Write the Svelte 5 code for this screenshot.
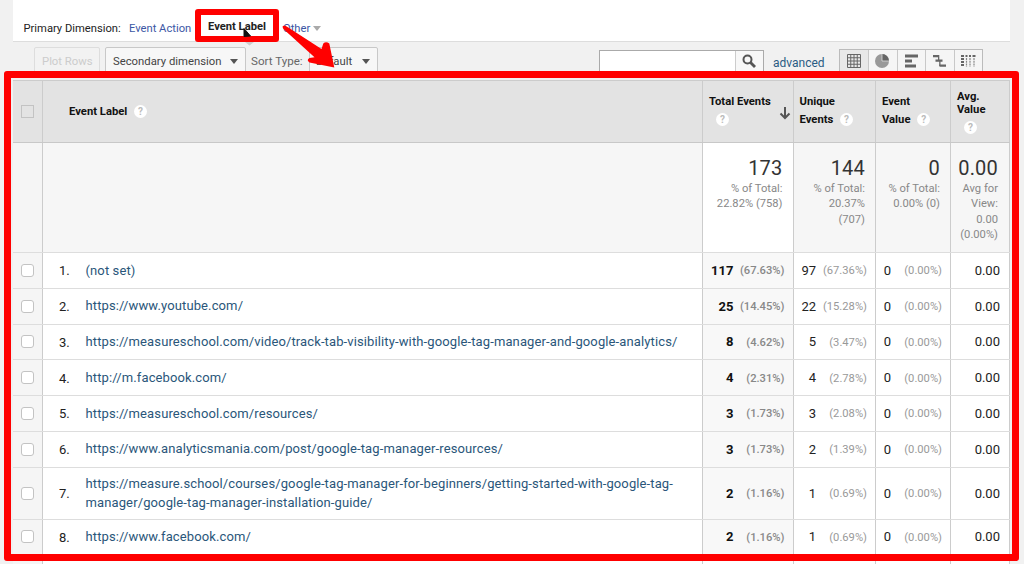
<script>
const views = ['table', 'pie', 'bars', 'compare', 'pivot'];

const totals = [
    { value: '173', lines: ['% of Total:', '22.82% (758)'] },
    { value: '144', lines: ['% of Total:', '20.37%', '(707)'] },
    { value: '0', lines: ['% of Total:', '0.00% (0)'] },
    { value: '0.00', lines: ['Avg for', 'View:', '0.00', '(0.00%)'] }
];

const rows = [
    { label: ['(not set)'], total: 117, totalPct: '67.63%', unique: 97, uniquePct: '67.36%' },
    { label: ['https://www.youtube.com/'], total: 25, totalPct: '14.45%', unique: 22, uniquePct: '15.28%' },
    { label: ['https://measureschool.com/video/track-tab-visibility-with-google-tag-manager-and-google-analytics/'], total: 8, totalPct: '4.62%', unique: 5, uniquePct: '3.47%' },
    { label: ['http://m.facebook.com/'], total: 4, totalPct: '2.31%', unique: 4, uniquePct: '2.78%' },
    { label: ['https://measureschool.com/resources/'], total: 3, totalPct: '1.73%', unique: 3, uniquePct: '2.08%' },
    { label: ['https://www.analyticsmania.com/post/google-tag-manager-resources/'], total: 3, totalPct: '1.73%', unique: 2, uniquePct: '1.39%' },
    { label: ['https://measure.school/courses/google-tag-manager-for-beginners/getting-started-with-google-tag-', 'manager/google-tag-manager-installation-guide/'], total: 2, totalPct: '1.16%', unique: 1, uniquePct: '0.69%' },
    { label: ['https://www.facebook.com/'], total: 2, totalPct: '1.16%', unique: 1, uniquePct: '0.69%' }
];
</script>

{#snippet help()}
    <span class="help">?</span>
{/snippet}

<div class="page">
    <div class="report">
        <nav class="dimensions">
            <span class="caption">Primary Dimension:</span>
            <span class="link action">Event Action</span>
            <b class="current">Event Label</b>
            <span class="link other">Other</span>
            <i class="caret light"></i>
        </nav>

        <div class="toolbar">
            <div class="button plot">Plot Rows</div>
            <div class="button secondary"><span>Secondary dimension</span><i class="caret"></i></div>
            <span class="sort">Sort Type:</span>
            <div class="button default"><span>Default</span><i class="caret"></i></div>
            <div class="search">
                <div class="field"></div>
                <div class="go">
                    <svg width="16" height="16" viewBox="0 0 16 16">
                        <circle cx="5.5" cy="5.5" r="4" fill="none" stroke="#555" stroke-width="2" />
                        <path d="M8.5 8.5L13 13" stroke="#555" stroke-width="2.8" />
                    </svg>
                </div>
            </div>
            <span class="advanced">advanced</span>
            <div class="views">
                {#each views as view, i}
                    <div class="view" class:active={i === 0}>
                        <svg width="18" height="16" viewBox="0 0 18 16" fill="#666">
                            {#if view === 'table'}
                                <path d="M2.5 1.5h13v13h-13zM2.5 4.75h13M2.5 8h13M2.5 11.25h13M5.75 1.5v13M9 1.5v13M12.25 1.5v13" fill="none" stroke="#666" />
                            {:else if view === 'pie'}
                                <circle cx="9" cy="8" r="7" fill="#999" />
                                <path d="M9 8V1a7 7 0 0 1 7 7z" fill="#666" />
                                <path d="M9 1v7h7" fill="none" stroke="#ddd" stroke-width=".8" />
                            {:else if view === 'bars'}
                                <path d="M3 1.5h13v3H3zM3 6.5h7v3H3zM3 11.5h11v3H3z" />
                            {:else if view === 'compare'}
                                <path d="M3 2h5.5v2.2H3zM5.5 6.5h7v2.2h-7zM9.5 11.5H16v2.2H9.5z" />
                                <path d="M8 2h1.3v5H8zM9.2 8h1.3v5H9.2z" />
                            {:else}
                                <path d="M2 2h3v2H2zM2 5h3v2H2zM2 8h3v2H2zM2 11h3v2H2z" />
                                <path d="M6.5 2h2v2h-2zM10 2h2v2h-2zM13.5 2h3v2h-3z" />
                                <path d="M7.5 5v9M11 5v9M15 5v9" stroke="#888" stroke-width="1.2" stroke-dasharray="2 .8" />
                            {/if}
                        </svg>
                    </div>
                {/each}
            </div>
        </div>

        <div class="table">
            <div class="row head">
                <div class="check"><i class="box"></i></div>
                <div class="name">Event Label {@render help()}</div>
                <div class="metric h-total">
                    <span>Total Events<br />{@render help()}</span>
                    <svg width="12" height="14" viewBox="0 0 12 14" fill="none" stroke="#555" stroke-width="2">
                        <path d="M6 1v11M1.5 7.5L6 12l4.5-4.5" />
                    </svg>
                </div>
                <div class="metric">Unique<br />Events {@render help()}</div>
                <div class="metric">Event<br />Value {@render help()}</div>
                <div class="metric h-avg">Avg.<br />Value<br />{@render help()}</div>
            </div>

            <div class="row summary">
                <div class="check"></div>
                <div></div>
                {#each totals as t}
                    <div class="sum">
                        <div class="big">{t.value}</div>
                        {#each t.lines as line}
                            <div class="sub">{line}</div>
                        {/each}
                    </div>
                {/each}
            </div>

            {#each rows as r, i}
                <div class="row item" class:tall={r.label.length > 1}>
                    <div class="check"><i class="box"></i></div>
                    <div class="name">
                        <span class="index">{i + 1}.</span>
                        <span class="url">{#each r.label as part}<span>{part}</span>{/each}</span>
                    </div>
                    <div class="val total"><b>{r.total}</b><span class="pct">({r.totalPct})</span></div>
                    <div class="val unique"><span class="num">{r.unique}</span><span class="pct">({r.uniquePct})</span></div>
                    <div class="val value"><span class="num">0</span><span class="pct">(0.00%)</span></div>
                    <div class="val avg">0.00</div>
                </div>
            {/each}
            <div class="row rest">
                <div class="check"></div><div></div><div></div><div></div><div></div><div></div>
            </div>
        </div>
    </div>

    <!-- annotations over the report -->
    <div class="frame"></div>
    <div class="mark"></div>
    <svg class="overlay" width="1024" height="564" viewBox="0 0 1024 564">
        <path d="M245 42L249.5 45.5L254 42z" fill="#ccc" />
        <path d="M244 28.5V36.5L250.5 36z" fill="#111" stroke="#111" />
        <path d="M282.7 26Q285 25 287.5 27L321.5 49L323.3 43.5Q326 41 329.3 43.5L334.3 67.5L309.5 62.5Q306 60 309.5 58L314.5 57.3L284.5 30Q282 28 282.7 26z" fill="#f00" />
    </svg>
</div>

<style>
:global(body) {
    background: #f1f1f1;
}

.page {
    position: relative;
    width: 1024px;
    height: 564px;
    overflow: hidden;
    background: #f1f1f1;
    font-family: Roboto, "Liberation Sans", sans-serif;
    font-size: 13px;
    color: #222;
}

.page * {
    box-sizing: border-box;
}

.report {
    width: 997px;
    margin-left: 13px;
}

.dimensions {
    display: flex;
    height: 42px;
    padding: 20px 0 0 10.5px;
    background: #fff;
    border-bottom: 1px solid #ddd;
    font-size: 11.2px;
    line-height: 17px;
    white-space: nowrap;
}

.caption {
    width: 105.5px;
}

.link {
    color: #3c57a5;
}

.action {
    width: 79px;
}

.current {
    width: 75px;
    margin-top: -2px;
    font-weight: 700;
    color: #222;
}

.caret {
    width: 0;
    height: 0;
    border: 4px solid transparent;
    border-top: 5px solid #555;
    border-bottom: 0;
}

.caret.light {
    margin: 6px 0 0 3px;
    border-top-color: #aaa;
}

.toolbar {
    display: flex;
    height: 38px;
    padding-top: 5px;
    background: #f1f1f1;
    font-size: 11.3px;
}

.button {
    display: flex;
    align-items: center;
    justify-content: space-between;
    height: 28px;
    border: 1px solid #c8c8c8;
    border-radius: 2px;
    background: #f7f7f7;
    color: #444;
    white-space: nowrap;
}

.plot {
    width: 66px;
    margin-left: 21px;
    padding: 1px 0 0 7px;
    border-color: #ddd;
    background: #f2f2f2;
    color: #ccc;
}

.secondary {
    width: 141px;
    margin-left: 5px;
    padding: 0 7px;
}

.sort {
    width: 58px;
    margin-left: 5px;
    font-size: 11.6px;
    line-height: 28px;
    color: #666;
    white-space: nowrap;
}

.default {
    width: 69px;
    padding: 0 7px 0 6px;
}

.search {
    display: flex;
    width: 165px;
    height: 26px;
    margin: 3px 0 0 221px;
    border: 1px solid #aaa;
}

.field {
    flex: 1;
    background: #fff;
}

.go {
    width: 28px;
    padding: 3px 0 0 6px;
    border-left: 1px solid #ccc;
    background: #f7f7f7;
}

.advanced {
    width: 67px;
    margin-left: 9px;
    font-size: 12px;
    line-height: 32px;
    color: #2a5b83;
}

.views {
    display: flex;
    width: 144px;
    height: 26px;
    margin: 2px 0 0 -1px;
    border: 1px solid #bbb;
}

.view {
    flex: 1;
    padding: 3px 0 0 5px;
    background: #f5f5f5;
}

.view + .view {
    border-left: 1px solid #c8c8c8;
    padding-left: 4px;
}

.view.active {
    background: #e8e8e8;
}

.row {
    display: grid;
    grid-template-columns: 30px 660px 90.5px 82.5px 75px 59px;
    border-bottom: 1px solid #ddd;
    background: #fff;
}

.row > div {
    border-right: 1px solid #ccc;
}

.check {
    display: flex;
    align-items: center;
    padding-left: 8px;
    background: #f5f5f5;
}

.box {
    width: 13px;
    height: 13px;
    border: 1px solid #c3c3c3;
    border-radius: 3px;
    background: #fff;
}

.head {
    height: 63px;
    border-top: 1px solid #ccc;
    border-bottom-color: #c8c8c8;
    background: #e3e3e3;
    font-size: 11.25px;
    font-weight: 700;
    line-height: 18px;
    color: #111;
}

.head .check {
    background: #e3e3e3;
}

.head .box {
    border-radius: 0;
    background: #e3e3e3;
}

.head .name {
    padding: 22px 0 0 26px;
}

.metric {
    padding: 12px 0 0 6px;
    white-space: nowrap;
}

.h-total {
    display: flex;
}

.h-total svg {
    margin: 13px 0 0 8px;
    flex: none;
}

.h-total .help {
    margin-left: 7px;
}

.h-avg {
    padding-top: 9px;
    line-height: 13px;
}

.h-avg .help {
    margin: 5px 0 0 7px;
}

.help {
    display: inline-block;
    width: 13px;
    height: 13px;
    margin-left: 4px;
    border-radius: 50%;
    background: #fff;
    font-size: 10px;
    line-height: 13px;
    text-align: center;
    color: #bbb;
}

.summary {
    height: 110px;
    background: #f6f6f6;
}

.sum {
    padding: 13px 10px 0 0;
    text-align: right;
    white-space: nowrap;
}

.sum:last-child {
    padding-right: 11px;
}

.sum:nth-child(3) {
    background: #fff;
}

.big {
    height: 25px;
    font-size: 20px;
    line-height: 25px;
    letter-spacing: .2px;
    color: #333;
}

.sub {
    font-size: 11.2px;
    line-height: 15.3px;
    color: #888;
}

.item {
    height: 35.75px;
}

.item.tall {
    height: 52px;
}

.item .name {
    display: flex;
    align-items: center;
    padding: 1px 0 0 16px;
    white-space: nowrap;
}

.index {
    width: 26.5px;
}

.url {
    color: #2a567a;
    line-height: 18.5px;
    letter-spacing: .12px;
}

.url span {
    display: block;
}

.val {
    display: flex;
    align-items: center;
    justify-content: flex-end;
    padding-right: 8px;
}

.val b {
    color: #111;
}

.pct {
    padding-top: 1px;
    font-size: 11.2px;
    text-align: right;
    color: #999;
}

.total .pct {
    width: 51px;
    font-weight: 500;
    color: #888;
}

.total {
    background: #f8f8f8;
}

.unique .pct {
    width: 51px;
}

.value .pct {
    width: 51px;
}

.avg {
    padding-right: 9px;
}

.rest {
    height: 20px;
}

.frame {
    position: absolute;
    left: 4px;
    top: 71px;
    width: 1015px;
    height: 490px;
    border: 7px solid #f00;
    border-radius: 3px;
}

.mark {
    position: absolute;
    left: 195px;
    top: 9px;
    width: 84px;
    height: 33px;
    border: 6.5px solid #f00;
    border-radius: 3px;
}

.overlay {
    position: absolute;
    left: 0;
    top: 0;
}
</style>
